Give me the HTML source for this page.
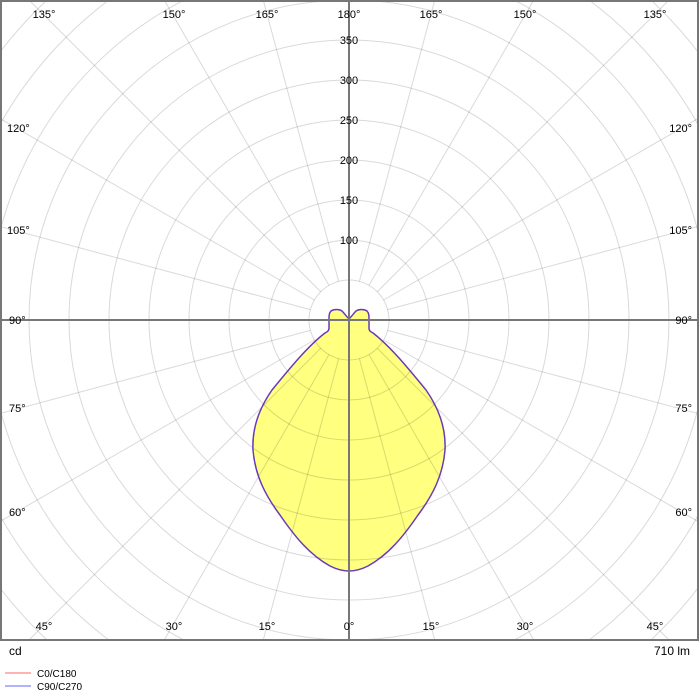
<!DOCTYPE html>
<html><head><meta charset="utf-8"><style>
html,body{margin:0;padding:0;background:#fff;overflow:hidden;width:700px;height:700px;}
svg{display:block;font-family:"Liberation Sans","DejaVu Sans",sans-serif;}
</style></head><body>
<svg width="700" height="700" viewBox="0 0 700 700" xmlns="http://www.w3.org/2000/svg">
<defs><clipPath id="c"><rect x="1" y="1" width="697" height="639"/></clipPath>
<path id="shape" d="M349,319 C346,316 344,313 342,311 C339,309 334,309 331,311 C329,313 329,316 329,320 L329,328 C329,331 327,332 325,333 C308,346 290,368 272,390 C258,410 252,430 253,450 C255,475 265,495 280,515 C295,537 310,555 330,566 C338,570 344,571 349,571 C354,571 360,570 368,566 C388,555 403,537 418,515 C433,495 443,475 445,450 C446,430 440,410 426,390 C408,368 390,346 373,333 C371,332 369,331 369,328 L369,320 C369,316 369,313 367,311 C364,309 359,309 356,311 C354,313 352,316 349,319 Z"/>
</defs>
<rect width="700" height="700" fill="#fff"/>
<g clip-path="url(#c)">
<use href="#shape" fill="#ffff80"/>
<g fill="none" stroke="#000" stroke-opacity="0.15" stroke-width="1">
<circle cx="349" cy="320" r="40"/><circle cx="349" cy="320" r="80"/><circle cx="349" cy="320" r="120"/><circle cx="349" cy="320" r="160"/><circle cx="349" cy="320" r="200"/><circle cx="349" cy="320" r="240"/><circle cx="349" cy="320" r="280"/><circle cx="349" cy="320" r="320"/><circle cx="349" cy="320" r="360"/><circle cx="349" cy="320" r="400"/><circle cx="349" cy="320" r="440"/><circle cx="349" cy="320" r="480"/>
<line x1="349" y1="280" x2="349" y2="-500" transform="rotate(15 349 320)"/>
<line x1="349" y1="280" x2="349" y2="-500" transform="rotate(30 349 320)"/>
<line x1="349" y1="280" x2="349" y2="-500" transform="rotate(45 349 320)"/>
<line x1="349" y1="280" x2="349" y2="-500" transform="rotate(60 349 320)"/>
<line x1="349" y1="280" x2="349" y2="-500" transform="rotate(75 349 320)"/>
<line x1="349" y1="280" x2="349" y2="-500" transform="rotate(105 349 320)"/>
<line x1="349" y1="280" x2="349" y2="-500" transform="rotate(120 349 320)"/>
<line x1="349" y1="280" x2="349" y2="-500" transform="rotate(135 349 320)"/>
<line x1="349" y1="280" x2="349" y2="-500" transform="rotate(150 349 320)"/>
<line x1="349" y1="280" x2="349" y2="-500" transform="rotate(165 349 320)"/>
<line x1="349" y1="280" x2="349" y2="-500" transform="rotate(-15 349 320)"/>
<line x1="349" y1="280" x2="349" y2="-500" transform="rotate(-30 349 320)"/>
<line x1="349" y1="280" x2="349" y2="-500" transform="rotate(-45 349 320)"/>
<line x1="349" y1="280" x2="349" y2="-500" transform="rotate(-60 349 320)"/>
<line x1="349" y1="280" x2="349" y2="-500" transform="rotate(-75 349 320)"/>
<line x1="349" y1="280" x2="349" y2="-500" transform="rotate(-105 349 320)"/>
<line x1="349" y1="280" x2="349" y2="-500" transform="rotate(-120 349 320)"/>
<line x1="349" y1="280" x2="349" y2="-500" transform="rotate(-135 349 320)"/>
<line x1="349" y1="280" x2="349" y2="-500" transform="rotate(-150 349 320)"/>
<line x1="349" y1="280" x2="349" y2="-500" transform="rotate(-165 349 320)"/>
</g>
<use href="#shape" fill="none" stroke="#6a3ab8" stroke-width="1.5"/>
<line x1="349" y1="0" x2="349" y2="640" stroke="#777" stroke-width="2"/>
<line x1="0" y1="320" x2="700" y2="320" stroke="#777" stroke-width="2"/>
</g>
<rect x="1" y="1" width="697" height="639" fill="none" stroke="#777" stroke-width="2"/>
<g font-size="11" fill="#000">
<g text-anchor="middle">
<text x="44" y="18">135°</text><text x="174" y="18">150°</text><text x="267" y="18">165°</text><text x="349" y="18">180°</text>
<text x="431" y="18">165°</text><text x="525" y="18">150°</text><text x="655" y="18">135°</text>
<text x="44" y="630">45°</text><text x="174" y="630">30°</text><text x="267" y="630">15°</text><text x="349" y="630">0°</text>
<text x="431" y="630">15°</text><text x="525" y="630">30°</text><text x="655" y="630">45°</text>
<text x="349" y="44">350</text><text x="349" y="84">300</text><text x="349" y="124">250</text><text x="349" y="164">200</text><text x="349" y="204">150</text><text x="349" y="244">100</text>
</g>
<text x="7" y="132">120°</text><text x="7" y="234">105°</text><text x="9" y="324">90°</text><text x="9" y="412">75°</text><text x="9" y="516">60°</text>
<g text-anchor="end">
<text x="692" y="132">120°</text><text x="692" y="234">105°</text><text x="692" y="324">90°</text><text x="692" y="412">75°</text><text x="692" y="516">60°</text>
</g>
<text x="9" y="655" font-size="12">cd</text>
<text x="690" y="655" font-size="12" text-anchor="end">710 lm</text>
<text x="37" y="677" font-size="10">C0/C180</text>
<text x="37" y="690" font-size="10">C90/C270</text>
</g>
<line x1="5" y1="673" x2="31" y2="673" stroke="#f99" stroke-width="1.5"/>
<line x1="5" y1="686" x2="31" y2="686" stroke="#99f" stroke-width="1.5"/>
</svg>
</body></html>
